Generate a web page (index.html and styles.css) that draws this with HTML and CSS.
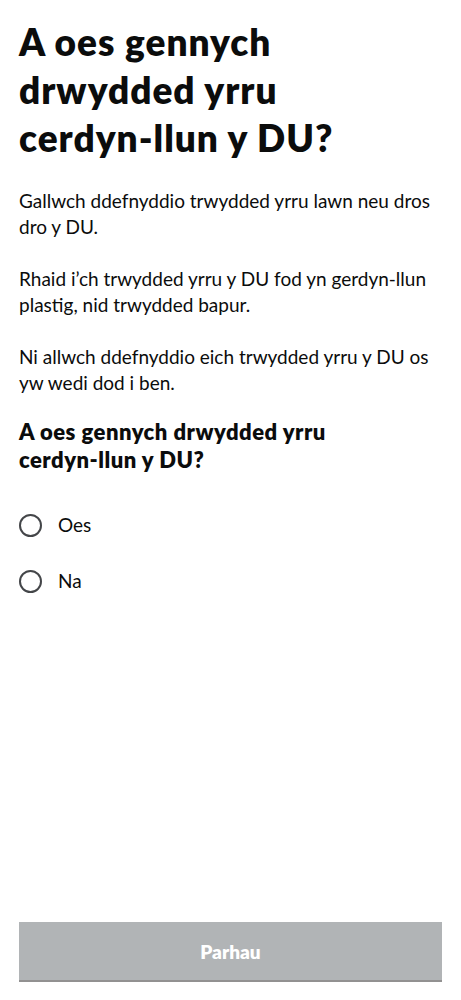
FILE: index.html
```html
<!DOCTYPE html>
<html lang="cy">
<head>
<meta charset="utf-8">
<title>Trwydded yrru</title>
<link rel="stylesheet" href="styles.css">
</head>
<body>
<main class="page">
  <h1 class="title">A oes gennych drwydded yrru cerdyn-llun y DU?</h1>
  <p class="body">Gallwch ddefnyddio trwydded yrru lawn neu dros dro y DU.</p>
  <p class="body">Rhaid i’ch trwydded yrru y DU fod yn gerdyn-llun plastig, nid trwydded bapur.</p>
  <p class="body body-last">Ni allwch ddefnyddio eich trwydded yrru y DU os yw wedi dod i ben.</p>
  <fieldset class="question">
    <legend class="legend">A oes gennych drwydded yrru cerdyn-llun y DU?</legend>
    <label class="radio"><span class="circle"></span><span class="label">Oes</span></label>
    <label class="radio"><span class="circle"></span><span class="label">Na</span></label>
  </fieldset>
  <div class="spacer"></div>
  <button class="button" disabled>Parhau</button>
</main>
</body>
</html>
```
FILE: styles.css
```css
html, body {
  margin: 0;
  padding: 0;
  background: #ffffff;
}
body {
  font-family: "Lato", "Liberation Sans", sans-serif;
  color: #0b0c0c;
}
.page {
  min-height: 1000px;
  box-sizing: border-box;
  padding: 18px 19px 18px 19px;
  display: flex;
  flex-direction: column;
}
.title {
  margin: 0 0 26px 0;
  font-family: "Lato", "Liberation Sans", sans-serif;
  font-weight: 800;
  font-size: 37px;
  line-height: 48px;
  letter-spacing: 1px;
  width: 380px;
}
.body {
  margin: 0 0 26px 0;
  font-size: 19px;
  line-height: 26px;
}
.body-last {
  margin-bottom: 22px;
}
.question {
  border: 0;
  margin: 0;
  padding: 0;
  min-width: 0;
}
.legend {
  padding: 0;
  margin: 0 0 23px 0;
  font-weight: 800;
  font-size: 22px;
  line-height: 28px;
  letter-spacing: 0.5px;
  width: 360px;
}
.radio {
  display: flex;
  flex-direction: row;
  align-items: center;
  height: 56px;
}
.circle {
  display: block;
  width: 19px;
  height: 19px;
  border: 2.5px solid #444649;
  border-radius: 50%;
  flex: none;
}
.label {
  display: block;
  margin-left: 16px;
  font-size: 19px;
  line-height: 26px;
}
.spacer {
  flex: 1;
}
.button {
  display: block;
  width: 100%;
  height: 60px;
  border: 0;
  border-bottom: 2px solid #929191;
  background: #b1b4b6;
  color: #ffffff;
  font-family: "Lato", "Liberation Sans", sans-serif;
  font-weight: 800;
  font-size: 19px;
  padding: 0;
}
```
